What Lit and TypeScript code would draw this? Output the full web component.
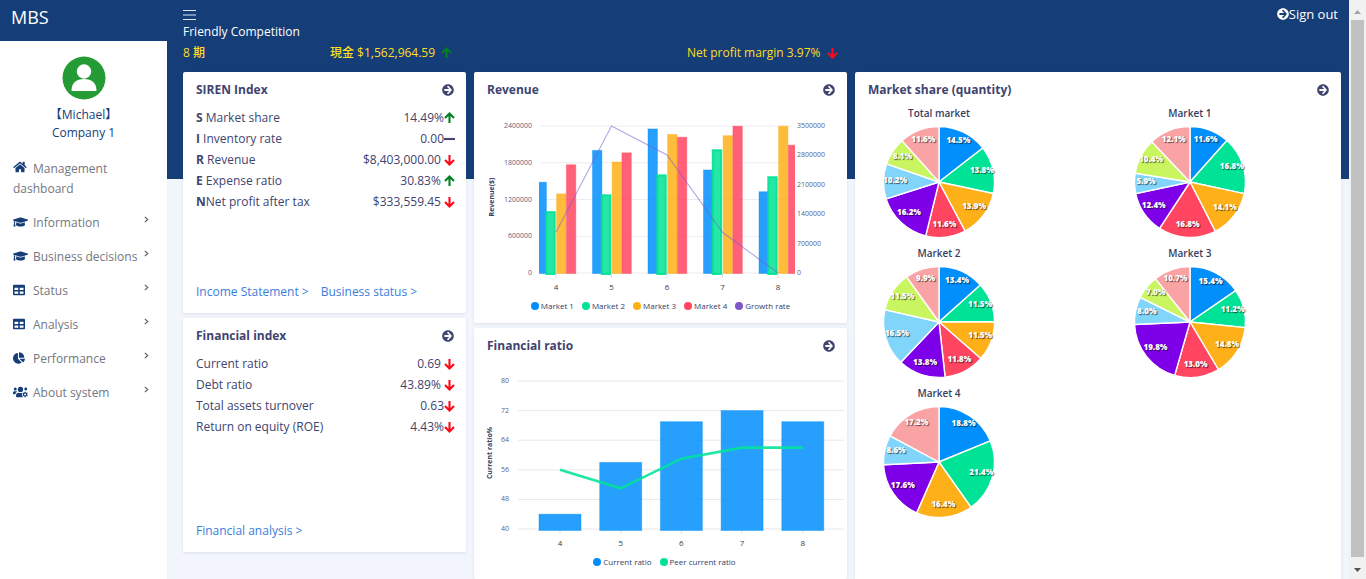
import { LitElement, html, svg, css } from "lit";
import { customElement, property } from "lit/decorators.js";

const GLYPHS: Record<string, [string, string]> = {
  home: ["0 0 576 512", "M280.37 148.26L96 300.11V464a16 16 0 0 0 16 16l112.06-.29a16 16 0 0 0 15.92-16V368a16 16 0 0 1 16-16h64a16 16 0 0 1 16 16v95.64a16 16 0 0 0 16 16.05L464 480a16 16 0 0 0 16-16V300L295.67 148.26a12.19 12.19 0 0 0-15.3 0zM571.6 251.47L488 182.56V44.05a12 12 0 0 0-12-12h-56a12 12 0 0 0-12 12v72.61L318.47 43a48 48 0 0 0-61 0L4.34 251.47a12 12 0 0 0-1.6 16.9l25.5 31A12 12 0 0 0 45.15 301l235.22-193.74a12.19 12.19 0 0 1 15.3 0L530.9 301a12 12 0 0 0 16.9-1.6l25.5-31a12 12 0 0 0-1.7-16.93z"],
  cap: ["0 0 640 512", "M622.34 153.2L343.4 67.5c-15.2-4.67-31.6-4.67-46.79 0L17.66 153.2c-23.54 7.23-23.54 38.36 0 45.59l48.63 14.94c-10.67 13.19-17.23 29.28-17.88 46.9C38.78 266.15 32 276.11 32 288c0 10.78 5.68 19.85 13.86 25.65L20.33 428.53C18.11 438.52 25.71 448 35.94 448h56.11c10.24 0 17.84-9.48 15.62-19.47L82.14 313.65C90.32 307.85 96 298.78 96 288c0-11.57-6.47-21.25-15.66-26.87.76-15.02 8.44-28.3 20.69-36.72L296.6 284.5c9.06 2.78 26.44 6.25 46.79 0l278.95-85.7c23.55-7.24 23.55-38.36 0-45.6zM352.79 315.09c-28.53 8.76-52.84 3.92-65.59 0l-145.02-44.55L128 384c0 35.35 85.96 64 192 64s192-28.65 192-64l-14.18-113.47-145.03 44.56z"],
  table: ["0 0 512 512", "M464 32H48C21.49 32 0 53.49 0 80v352c0 26.51 21.49 48 48 48h416c26.51 0 48-21.49 48-48V80c0-26.51-21.49-48-48-48zM224 416H64v-96h160v96zm0-160H64v-96h160v96zm224 160H288v-96h160v96zm0-160H288v-96h160v96z"],
  pie: ["0 0 544 512", "M527.79 288H290.5l158.03 158.03c6.04 6.04 15.98 6.53 22.19.68 38.7-36.46 65.32-85.61 73.13-140.86 1.34-9.46-6.51-17.85-16.06-17.85zm-15.83-64.8C503.72 103.74 408.26 8.28 288.8.04 279.68-.59 272 7.1 272 16.24V240h223.77c9.14 0 16.82-7.68 16.19-16.8zM224 288V50.71c0-9.55-8.39-17.4-17.84-16.06C86.99 51.49-4.1 155.6.14 280.37 4.5 408.51 114.83 513.59 243.03 511.98c50.4-.63 96.97-16.87 135.26-44.03 7.9-5.6 8.42-17.23 1.57-24.08L224 288z"],
  users: ["0 0 640 512", "M96 64a64 64 0 1 1 0 128a64 64 0 0 1 0-128zM64 224h64c18 0 33 7 45 18-40 22-68 61-74 110H32c-18 0-32-14-32-32v-32c0-35 29-64 64-64zM320 32a112 112 0 1 1 0 224a112 112 0 0 1 0-224zM243 288h9c42 20 92 20 134 0-12 30-8 50 4 70-22 28-14 52 6 80 10 18 24 30 40 42H176c-26 0-48-22-48-48v-29c0-64 51-115 115-115zM544 64a62 62 0 1 1 0 124a62 62 0 0 1 0-124zM494 242h44l8 34c10 3 20 9 28 16l33-10 22 38-25 24c2 11 2 21 0 32l25 24-22 38-33-10c-8 7-18 13-28 16l-8 34h-44l-8-34c-10-3-20-9-28-16l-33 10-22-38 25-24c-2-11-2-21 0-32l-25-24 22-38 33 10c8-7 18-13 28-16zM516 318a42 42 0 1 0 0 84a42 42 0 0 0 0-84z"],
  go: ["0 0 512 512", "M256 8c137 0 248 111 248 248S393 504 256 504 8 393 8 256 119 8 256 8zm-28.900 127.600L310 218H120c-13.300 0-24 10.700-24 24v28c0 13.300 10.700 24 24 24h190l-82.900 82.400c-9.700 9.300-9.900 24.800-.4 34.300l17 16.900c9.400 9.400 24.600 9.400 33.900 0L410.300 273c9.400-9.400 9.400-24.600 0-33.900L277.600 84.300c-9.400-9.400-24.600-9.400-33.900 0l-17 16.900c-9.500 9.600-9.300 25.100.4 34.400z"],
};

const glyph = (name: string) => html`<svg class="glyph ${name}" viewBox=${GLYPHS[name][0]} aria-hidden="true">
  <path fill="currentColor" fill-rule="evenodd" d=${GLYPHS[name][1]}></path>
</svg>`;

type Trend = "up" | "down" | "flat";
const TREND_PATHS: Record<Trend, string> = {
  up: "M5.5 11V1.5M1 6L5.5 1.5L10 6",
  down: "M5.5 1V10.5M1 6L5.5 10.5L10 6",
  flat: "M0 6H11",
};
const trend = (t: Trend) => html`<svg class="trend ${t}" viewBox="0 0 11 12" role="img" aria-label=${t}>
  <path fill="none" stroke="currentColor" stroke-width="2.1" d=${TREND_PATHS[t]}></path>
</svg>`;

const BLUE = "#008ffb", GREEN = "#00e396", ORANGE = "#feb019", RED = "#ff4560", VIOLET = "#775dd0";
const CHART_FONT = css`"Open Sans", "Noto Sans", sans-serif`;

const chartStyles = css`
  :host { display: block; font-family: ${CHART_FONT}; color: #373d5f; }
  svg { display: block; width: 100%; overflow: visible; }
  .tick { font-size: 7px; fill: #5c6283; }
  .cat { font-size: 8px; fill: #373d3f; }
  .axis { font-size: 7px; font-weight: 700; fill: #373d5f; }
  .legend { display: flex; justify-content: center; gap: 8px; font-size: 8px; line-height: 12px; margin: 0; padding: 0; list-style: none; }
  .legend li { display: flex; align-items: center; gap: 2px; white-space: nowrap; }
  .dot { width: 8px; height: 8px; border-radius: 50%; }
`;

const legend = (items: [string, string][]) => html`<ul class="legend">
  ${items.map(([name, color]) => html`<li><span class="dot" style="background:${color}"></span>${name}</li>`)}
</ul>`;

@customElement("revenue-chart")
class RevenueChart extends LitElement {
  static styles = [chartStyles, css`.legend { margin-top: 4px; }`];

  private series = [
    { color: BLUE, edge: 1, values: [1.49, 2.01, 2.36, 1.69, 1.335] },
    { color: GREEN, edge: 2, values: [1.01, 1.285, 1.61, 2.02, 1.58] },
    { color: ORANGE, edge: 1, values: [1.3, 1.82, 2.27, 2.25, 2.405] },
    { color: RED, edge: 1, values: [1.775, 1.97, 2.225, 2.405, 2.095] },
  ];
  private growth = [970000, 3500000, 2810000, 970000, 0];

  render() {
    const top = 24, base = 171, h = base - top;
    const cx = (i: number) => 82 + 55.5 * i;
    return html`
      <svg viewBox="0 0 373 194" role="img" aria-label="Revenue by market and growth rate">
        <clipPath id="plot"><rect x="65" y="0" width="256" height="180"></rect></clipPath>
        ${[0, 1, 2, 3, 4].map((i) => {
          const y = top + (h * i) / 4;
          return svg`<line x1="67" x2="319" y1=${y} y2=${y} stroke="#ececf0"></line>
            <text class="tick" x="58" y=${y + 2} text-anchor="end">${2400000 - 600000 * i}</text>`;
        })}
        ${[0, 1, 2, 3, 4, 5].map((i) => svg`<text class="tick" x="323" y=${top + (h * i) / 5 + 2}>${3500000 - 700000 * i}</text>`)}
        <text class="axis" text-anchor="middle" transform="translate(20 95) rotate(-90)">Revenue($)</text>
        <g clip-path="url(#plot)">
          ${this.series.map((s, k) => s.values.map((v, i) => {
            const bh = (v / 2.4) * h;
            const inset = s.edge / 2;
            return svg`<rect x=${cx(i) - 19.5 + k * 9.8 + inset - (k === 1 ? 1 : 0)} y=${base - bh + inset} width=${10.4 - s.edge} height=${bh}
              fill=${s.color} fill-opacity="0.85" stroke=${s.color} stroke-width=${s.edge} stroke-opacity=${s.edge > 1 ? 0.9 : 0.4}></rect>`;
          }))}
        </g>
        <polyline fill="none" stroke=${VIOLET} stroke-opacity="0.55" stroke-width="1.1"
          points=${this.growth.map((g, i) => `${cx(i)},${base - (g / 3500000) * h}`).join(" ")}></polyline>
        ${[4, 5, 6, 7, 8].map((c, i) => svg`<line x1=${cx(i)} x2=${cx(i)} y1="172" y2="176" stroke="#e0e0e0"></line>
          <text class="cat" x=${cx(i)} y="188" text-anchor="middle">${c}</text>`)}
      </svg>
      ${legend([["Market 1", BLUE], ["Market 2", GREEN], ["Market 3", ORANGE], ["Market 4", RED], ["Growth rate", "#7e57c8"]])}`;
  }
}

@customElement("ratio-chart")
class RatioChart extends LitElement {
  static styles = [chartStyles, css`.legend { margin-top: 4px; padding-left: 8px; }`];

  private own = [44, 58, 69, 72, 69];
  private peer = [56, 51, 59, 62, 62];

  render() {
    const top = 23, base = 171, h = base - top;
    const cx = (i: number) => 86 + 60.7 * i;
    const y = (v: number) => base - ((v - 40) / 40) * h;
    return html`
      <svg viewBox="0 0 373 194" role="img" aria-label="Current ratio against peers">
        ${[80, 72, 64, 56, 48, 40].map((v) => svg`<line x1="44" x2="370" y1=${y(v)} y2=${y(v)} stroke="#e8e8ec"></line>
          <text class="tick" x="35" y=${y(v) + 2} text-anchor="end">${v}</text>`)}
        <text class="axis" text-anchor="middle" transform="translate(18 95) rotate(-90)">Current ratio%</text>
        ${this.own.map((v, i) => svg`<rect x=${cx(i) - 21} y=${y(v)} width="42" height=${base + 1.5 - y(v)} fill=${BLUE} fill-opacity="0.85" stroke=${BLUE} stroke-opacity="0.4"></rect>
          <line x1=${cx(i)} x2=${cx(i)} y1="173" y2="176" stroke="#e0e0e0"></line>
          <text class="cat" x=${cx(i)} y="188" text-anchor="middle">${4 + i}</text>`)}
        <polyline fill="none" stroke=${GREEN} stroke-width="2.6" stroke-opacity="0.87"
          points=${this.peer.map((v, i) => `${cx(i)},${y(v)}`).join(" ")}></polyline>
      </svg>
      ${legend([["Current ratio", BLUE], ["Peer current ratio", GREEN]])}`;
  }
}

const PIE_COLORS = [BLUE, GREEN, ORANGE, RED, "#7d00e8", "#81d4fa", "#c8f560", "#f9a3a4"];

@customElement("market-pie")
class MarketPie extends LitElement {
  static styles = css`
    :host { display: block; font-family: ${CHART_FONT}; }
    figure { margin: 0; width: 142px; }
    figcaption { text-align: center; font-size: 10px; line-height: 18px; font-weight: 600; color: #373d5f; }
    svg { display: block; width: 100%; overflow: visible; }
    .pct { font-size: 8px; font-weight: 800; fill: #fff; text-shadow: 1px 1px 1px rgba(0, 0, 0, 0.6); }
  `;
  @property() name = "";
  @property({ attribute: false }) shares: number[] = [];

  render() {
    const total = this.shares.reduce((a, b) => a + b, 0);
    const r = 55.5;
    const at = (f: number, rad: number) => [71 + rad * Math.sin(f * 2 * Math.PI), 60 - rad * Math.cos(f * 2 * Math.PI)];
    let acc = 0;
    const parts = this.shares.map((s, i) => {
      const from = acc / total;
      acc += s;
      return { s, from, to: acc / total, color: PIE_COLORS[i] };
    }).filter((p) => p.s > 0);
    return html`<figure>
      <figcaption>${this.name}</figcaption>
      <svg viewBox="0 0 142 122" role="img" aria-label=${this.name}>
        ${parts.map((p) => {
          const [x1, y1] = at(p.from, r), [x2, y2] = at(p.to, r);
          return svg`<path fill=${p.color} stroke="#fff" stroke-width="1.4" d=${`M71 60L${x1} ${y1}A${r} ${r} 0 0 1 ${x2} ${y2}Z`}></path>`;
        })}
        ${parts.map((p) => {
          const [x, y] = at((p.from + p.to) / 2, 44);
          return svg`<text class="pct" text-anchor="middle" x=${x} y=${y + 1}>${p.s.toFixed(1)}%</text>`;
        })}
      </svg>
    </figure>`;
  }
}

@customElement("app-root")
class AppRoot extends LitElement {
  static styles = css`
    :host {
      display: flex; height: 100vh; overflow: hidden;
      font: 12px/18px "Open Sans", "Noto Sans", "Noto Sans CJK TC", sans-serif;
      color: #40446f; background: #f2f5fc;
    }
    a { color: inherit; text-decoration: none; }
    .glyph { display: block; height: 12px; }
    .sidebar { flex: 0 0 167px; min-width: 0; background: #fff; }
    .brand { background: #153d77; color: #fff; font-size: 18px; line-height: 35px; padding: 0 11px 6px; }
    .profile { display: flex; flex-direction: column; align-items: center; padding: 15px 0 17px; color: #153d77; }
    .avatar { width: 44px; height: 44px; margin-bottom: 6px; }
    .nav { display: grid; gap: 14px; color: #74777f; padding: 0 18px 0 13px; }
    .nav a { display: flex; align-items: flex-start; line-height: 20px; }
    .nav .wrap { display: block; }
    .nav .glyph { color: #153d77; width: 15px; margin: 3px 5px 0 0; flex: none; }
    .nav .home { display: inline-block; width: 14px; margin: 0 6px 0 0; }
    .nav .table, .nav .pie { width: 12px; margin-right: 8px; }
    .label { flex: 1; white-space: nowrap; }
    .chev { width: 5px; height: 7px; margin-top: 3px; flex: none; }
    .main { flex: 1; min-width: 0; padding: 5px 8px 0 16px; background: linear-gradient(#153d77 179px, transparent 179px); overflow: hidden; }
    .top { display: flex; justify-content: space-between; align-items: center; height: 18px; color: #fff; }
    .menu { border: 0; padding: 0; background: none; color: #fff; width: 13px; height: 12px; margin-top: 2px; }
    .menu svg { display: block; }
    .signout { display: flex; align-items: center; padding-right: 3px; font-size: 13px; }
    .title { margin: 0; color: #fff; font-size: 12px; line-height: 18px; font-weight: 500; }
    .facts { display: grid; grid-template-columns: 147fr 357fr 654fr; color: #ffde21; margin: 3px 0 10px; font-weight: 500; }
    .trend { width: 11px; height: 12px; vertical-align: -2px; }
    .facts .trend { margin-left: 3px; }
    .up { color: #008020; }
    .down { color: #ff0818; }
    .board { display: grid; grid-template-columns: 283fr 373fr 486fr; gap: 8px; }
    .col { display: flex; flex-direction: column; gap: 5px; min-width: 0; }
    .card { background: #fff; border-radius: 2px; box-shadow: 0 1px 3px rgba(60, 80, 130, 0.12); }
    .card header { display: flex; justify-content: space-between; align-items: center; padding: 9px 12px 3px 13px; }
    .card h2 { margin: 0; font-size: 12px; line-height: 18px; font-weight: 700; }
    .list { display: flex; flex-direction: column; justify-content: space-between; }
    .siren { min-height: 241px; }
    .fin { min-height: 234px; }
    .chart { padding-bottom: 11px; }
    table { border-collapse: collapse; width: 100%; }
    th, td { padding: 0; font-weight: 400; line-height: 21px; text-align: left; height: 21px; white-space: nowrap; }
    td { text-align: right; }
    .rows { flex: 1; padding: 5px 11px 0 13px; }
    .links { display: flex; gap: 12px; padding: 0 13px 12px; color: #3b7ddd; }
    .tall { flex: 1; min-height: 540px; }
    .pies { display: grid; grid-template-columns: 6fr 5fr; padding: 2px 13px 0; }
    .scroll { flex: 0 0 17px; background: #f1f1f1; display: flex; flex-direction: column; align-items: center; }
    .scroll svg { width: 17px; height: 20px; flex: none; }
    .thumb { flex: 1; width: 13px; background: #c1c1c1; }
    .scroll .end { height: 22px; }
  `;

  private item(icon: string, label: string) {
    return html`<a href="#">${glyph(icon)}<span class="label">${label}</span>
      <svg class="chev" viewBox="0 0 5 7" aria-hidden="true"><path d="M.8 .8L3.8 3.5L.8 6.2" fill="none" stroke="#555a66" stroke-width="1.1"></path></svg></a>`;
  }

  private head(title: string) {
    return html`<header><h2>${title}</h2><a href="#" aria-label="Open ${title}">${glyph("go")}</a></header>`;
  }

  private row(initial: string, label: string, value: string, t: Trend) {
    return html`<tr><th scope="row">${initial ? html`<b>${initial}</b>` : ""}${label}</th><td>${value}${trend(t)}</td></tr>`;
  }

  render() {
    return html`
      <aside class="sidebar">
        <div class="brand">MBS</div>
        <div class="profile">
          <svg class="avatar" viewBox="0 0 44 44" aria-hidden="true">
            <circle cx="22" cy="22" r="21.5" fill="#259b35"></circle>
            <circle cx="22" cy="15.5" r="7.2" fill="#fff"></circle>
            <path d="M9.5 35C9.5 27 14 23 22 23S34.500 27 34.500 35Z" fill="#fff"></path>
          </svg>
          <span>【Michael】</span><span>Company 1</span>
        </div>
        <nav class="nav">
          <a class="wrap" href="#">${glyph("home")}Management dashboard</a>
          ${this.item("cap", "Information")} ${this.item("cap", "Business decisions")}
          ${this.item("table", "Status")} ${this.item("table", "Analysis")}
          ${this.item("pie", "Performance")} ${this.item("users", "About system")}
        </nav>
      </aside>
      <main class="main">
        <div class="top">
          <button class="menu" aria-label="Toggle menu"><svg width="13" height="12" viewBox="0 0 13 12"><path d="M0 1.500H13M0 6H13M0 10.500H13" stroke="#dfe6f2" stroke-width="1.200"></path></svg></button>
          <a class="signout" href="#">${glyph("go")}Sign out</a>
        </div>
        <h1 class="title">Friendly Competition</h1>
        <div class="facts">
          <span>8 期</span><span>現金 $1,562,964.59 ${trend("up")}</span><span>Net profit margin 3.97% ${trend("down")}</span>
        </div>
        <div class="board">
          <div class="col">
            <section class="card list siren">
              ${this.head("SIREN Index")}
              <div class="rows"><table>
                ${this.row("S", " Market share", "14.49%", "up")}
                ${this.row("I", " Inventory rate", "0.00", "flat")}
                ${this.row("R", " Revenue", "$8,403,000.00 ", "down")}
                ${this.row("E", " Expense ratio", "30.83% ", "up")}
                ${this.row("N", "Net profit after tax", "$333,559.45 ", "down")}
              </table></div>
              <div class="links"><a href="#">Income Statement &gt;</a><a href="#">Business status &gt;</a></div>
            </section>
            <section class="card list fin">
              ${this.head("Financial index")}
              <div class="rows"><table>
                ${this.row("", "Current ratio", "0.69 ", "down")}
                ${this.row("", "Debt ratio", "43.89% ", "down")}
                ${this.row("", "Total assets turnover", "0.63", "down")}
                ${this.row("", "Return on equity (ROE)", "4.43%", "down")}
              </table></div>
              <div class="links"><a href="#">Financial analysis &gt;</a></div>
            </section>
          </div>
          <div class="col">
            <section class="card chart">${this.head("Revenue")}<revenue-chart></revenue-chart></section>
            <section class="card chart">${this.head("Financial ratio")}<ratio-chart></ratio-chart></section>
          </div>
          <section class="card tall">
            ${this.head("Market share (quantity)")}
            <div class="pies">
              <market-pie name="Total market" .shares=${[14.5, 13.8, 13.9, 11.6, 16.2, 10.2, 8.1, 11.6]}></market-pie>
              <market-pie name="Market 1" .shares=${[11.6, 16.8, 14.1, 16.8, 12.4, 5.9, 10.4, 12.1]}></market-pie>
              <market-pie name="Market 2" .shares=${[13.4, 11.5, 11.5, 11.8, 13.8, 16.5, 11.5, 9.9]}></market-pie>
              <market-pie name="Market 3" .shares=${[15.4, 11.2, 14.8, 13, 19.8, 8, 7, 10.7]}></market-pie>
              <market-pie name="Market 4" .shares=${[18.8, 21.4, 16.4, 0, 17.6, 8.6, 0, 17.2]}></market-pie>
            </div>
          </section>
        </div>
      </main>
      <div class="scroll" aria-hidden="true">
        <svg viewBox="0 0 17 20"><path d="M5 14L8.500 10L12 14Z" fill="#a3a3a3"></path></svg>
        <div class="thumb"></div>
        <svg class="end" viewBox="0 0 17 22"><path d="M5 11L8.500 15L12 11Z" fill="#505050"></path></svg>
      </div>`;
  }
}
